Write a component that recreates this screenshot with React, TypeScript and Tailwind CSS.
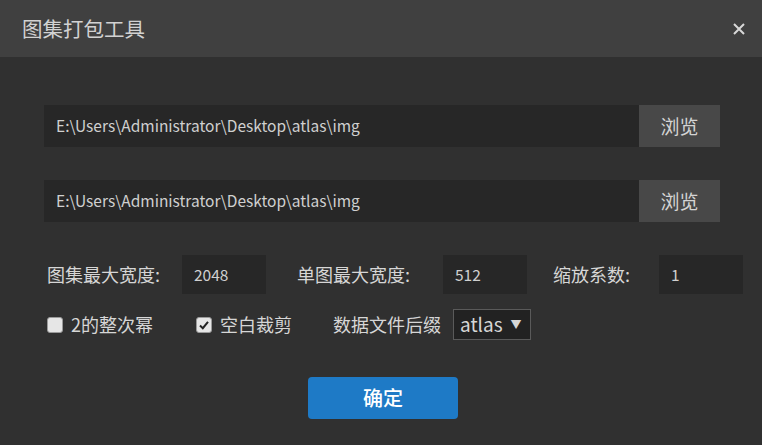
import React, { useState } from 'react';

const cjk = { fontFamily: '"Noto Sans CJK SC", "Noto Sans", sans-serif' };

function PathRow({ value }: { value: string }) {
  return (
    <div className="flex h-[42px] ml-[44px] mr-[42px]">
      <div className="flex-1 bg-[#272727] flex items-center pl-3 text-[15.5px] text-[#d0d0d0]">
        {value}
      </div>
      <button className="w-[81px] bg-[#484848] text-[#d4d4d4] text-[19px] flex items-center justify-center">
        浏览
      </button>
    </div>
  );
}

function NumField({ label, value, labelW }: { label: string; value: string; labelW: string }) {
  return (
    <div className="flex items-center">
      <span className={`text-[18px] text-[#d6d6d6] ${labelW}`}>{label}</span>
      <div className="w-[84px] h-[39px] bg-[#272727] flex items-center pl-[12px] text-[15.5px] text-[#d0d0d0]">
        {value}
      </div>
    </div>
  );
}

function Check({ checked, label, w }: { checked: boolean; label: string; w: string }) {
  return (
    <div className={`flex items-center gap-[8px] ${w}`}>
      <span className="w-[16px] h-[16px] rounded-[3px] bg-[#e6e6e6] border border-[#9a9a9a] flex items-center justify-center">
        {checked && (
          <svg width="12" height="12" viewBox="0 0 12 12">
            <path d="M2 6.5 L4.8 9.2 L10 2.8" fill="none" stroke="#222" strokeWidth="2" />
          </svg>
        )}
      </span>
      <span className="text-[18px] text-[#d6d6d6]">{label}</span>
    </div>
  );
}

export default function App() {
  const [suffix] = useState('atlas');
  return (
    <div className="w-[762px] h-[445px] bg-[#303030] flex flex-col" style={cjk}>
      <div className="h-[57px] bg-[#404040] flex items-center justify-between pl-[22px] pr-[16px]">
        <span className="text-[20.5px] text-[#d2d2d2]">图集打包工具</span>
        <svg width="14" height="14" viewBox="0 0 14 14">
          <path d="M2 2 L12 12 M12 2 L2 12" stroke="#d8d8d8" strokeWidth="2" />
        </svg>
      </div>

      <div className="pt-[48px] flex flex-col gap-[33px]">
        <PathRow value="E:\Users\Administrator\Desktop\atlas\img" />
        <PathRow value="E:\Users\Administrator\Desktop\atlas\img" />
      </div>

      <div className="mt-[33px] ml-[47px] flex items-center">
        <NumField label="图集最大宽度:" value="2048" labelW="w-[135px]" />
        <div className="w-[31px]" />
        <NumField label="单图最大宽度:" value="512" labelW="w-[146px]" />
        <div className="w-[26px]" />
        <NumField label="缩放系数:" value="1" labelW="w-[106px]" />
      </div>

      <div className="mt-[15px] ml-[47px] flex items-center h-[31px]">
        <Check checked={false} label="2的整次幂" w="w-[149px]" />
        <Check checked label="空白裁剪" w="w-[137px]" />
        <span className="text-[18px] text-[#d6d6d6]">数据文件后缀</span>
        <div className="ml-[12px] w-[78px] h-[31px] border border-[#5a5a5a] bg-[#222222] flex items-center pl-[6px] text-[#d6d6d6] text-[19px]">
          {suffix}
          <span className="ml-[8px] text-[11px]">▼</span>
        </div>
      </div>

      <div className="mt-[37px] flex justify-center">
        <button className="w-[150px] h-[42px] rounded-[4px] bg-[#1e7ac6] text-white text-[20px] font-medium ml-[4px]">
          确定
        </button>
      </div>
    </div>
  );
}
